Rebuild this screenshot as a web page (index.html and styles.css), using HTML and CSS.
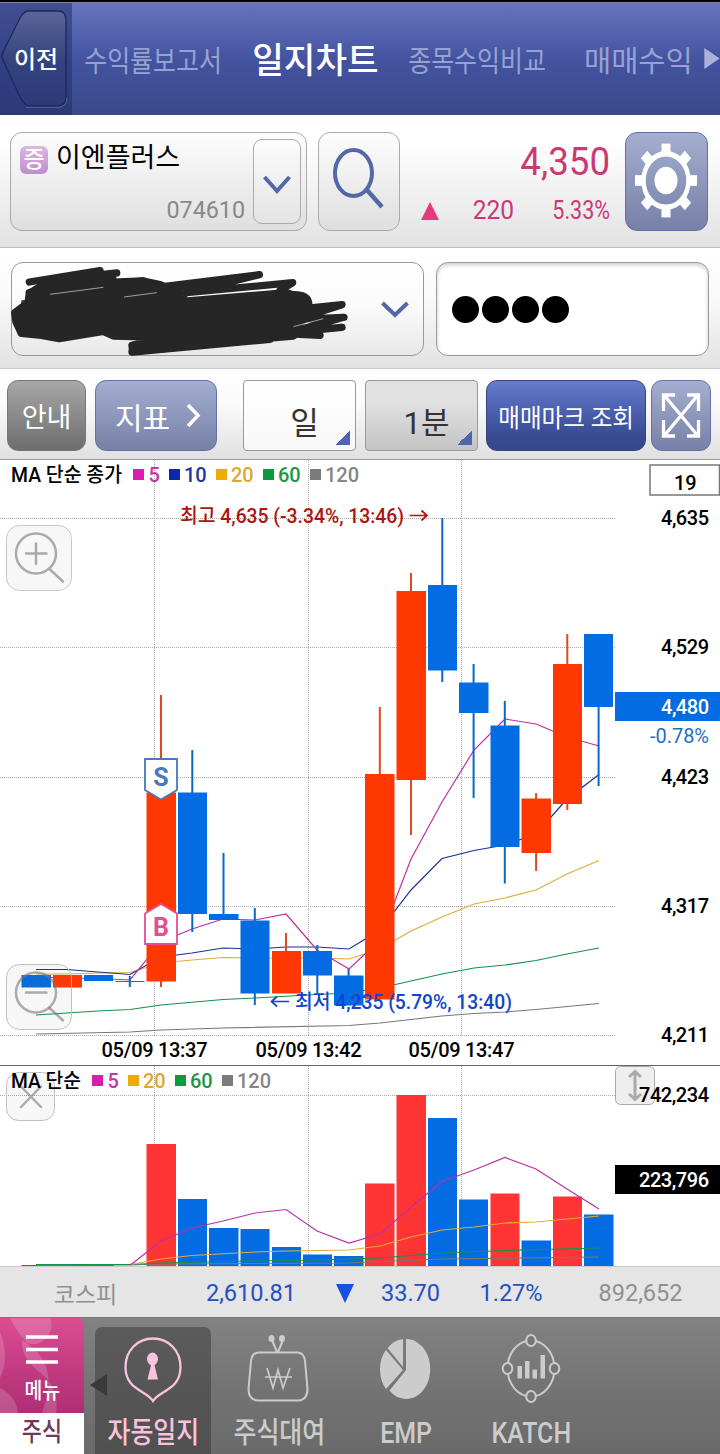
FILE: index.html
```html
<!DOCTYPE html>
<html lang="ko">
<head>
<meta charset="utf-8">
<title>일지차트</title>
<link rel="stylesheet" href="styles.css">
</head>
<body>
<div class="app">
  <header class="header">
    <button class="back">
      <svg class="back-shape" viewBox="0 0 72 113"><defs><linearGradient id="bk" x1="0" y1="0" x2="0" y2="1"><stop offset="0" stop-color="#5b6699"/><stop offset=".5" stop-color="#35447f"/><stop offset="1" stop-color="#2c3a78"/></linearGradient></defs><path d="M28 8H58Q66 8 66 17V94Q66 103 58 103H28Q24 101 20 94L3 57Q1 53 3 49L20 15Q24 8 28 8Z" fill="url(#bk)" stroke="#1d2858" stroke-width="1.3"/><path d="M26 104.300H59Q67 103 67 95" fill="none" stroke="#5663a0" stroke-width="1"/></svg>
      <span class="back-label">이전</span>
    </button>
    <nav class="tabs">
      <a class="tab tab-report"><span>수익률보고서</span></a>
      <a class="tab tab-chart"><span>일지차트</span></a>
      <a class="tab tab-compare"><span>종목수익비교</span></a>
      <a class="tab tab-trade"><span>매매수익</span></a>
    </nav>
    <svg class="more" viewBox="0 0 17 24"><path d="M1 1L17 12L1 23Z" fill="#a9b1dc"/></svg>
  </header>

  <section class="stock">
    <div class="combo">
      <div class="combo-main">
        <div class="name-line"><span class="badge">증</span><span class="name">이엔플러스</span></div>
        <div class="code">074610</div>
      </div>
      <button class="drop"><svg width="28" height="20" viewBox="0 0 28 20"><path d="M1.500 2L14 16L26.500 2" fill="none" stroke="#5468a8" stroke-width="4"/></svg></button>
    </div>
    <button class="search"><svg width="82" height="99" viewBox="0 0 82 99"><ellipse cx="34.500" cy="40" rx="18.500" ry="23" fill="none" stroke="#5468a8" stroke-width="4"/><path d="M48 57L63 74" stroke="#5468a8" stroke-width="4.500"/></svg></button>
    <div class="quote">
      <div class="price">4,350</div>
      <div class="change"><svg class="up" viewBox="0 0 18 18"><path d="M9 0L18 18H0Z" fill="#e63a7d"/></svg><span class="diff">220</span><span class="rate"><span>5.33%</span></span></div>
    </div>
    <button class="gear"><svg width="83" height="99" viewBox="0 0 83 99"><g transform="translate(40 47.500) scale(1 1.190)" fill="#fff"><g id="teeth"><rect x="-4.500" y="-31" width="9" height="9"/><rect x="-4.500" y="22" width="9" height="9"/><rect x="-31" y="-4.500" width="9" height="9"/><rect x="22" y="-4.500" width="9" height="9"/></g><use href="#teeth" transform="rotate(45)"/><circle r="22.500" fill="none" stroke="#fff" stroke-width="4.500"/><circle r="11.500"/></g></svg></button>
  </section>

  <section class="account">
    <div class="select">
      <svg width="28" height="18" viewBox="0 0 28 18"><path d="M1.500 2L14 14L26.500 2" fill="none" stroke="#5468a8" stroke-width="4"/></svg>
      <svg class="scribble" viewBox="0 0 1056 285"><g fill="#262626" stroke="#262626" stroke-width="22" stroke-linecap="round" stroke-linejoin="round"><path d="M44 152L84 122L88 94L120 74L300 62L430 57L480 68L552 98L545 118L860 92L920 112L925 165L870 200L880 222L810 228L398 269L396 250L500 226L340 222L310 208L178 230L124 220L64 214L48 180Z"/><path fill="none" d="M88 60L300 26L140 56L350 33L88 92L430 57L300 78L478 68L440 80L778 38L560 92L878 62L840 86M860 100Q920 92 926 122M910 140L1026 128L890 172L1032 166L880 208L1026 196L840 214L960 220M396 270L810 232"/><path fill="none" stroke-width="18" d="M160 55L340 46M200 72L420 60M500 84L640 64"/><path fill="none" stroke-width="4" d="M66 135V117H90"/></g><path d="M150 97L310 76M372 105L470 92M880 194L970 170" fill="none" stroke="#ddd" stroke-width="2"/></svg>
    </div>
    <div class="password"><i></i><i></i><i></i><i></i></div>
  </section>

  <section class="tools">
    <button class="btn guide">안내</button>
    <button class="btn indicator"><span>지표</span><svg width="15" height="25" viewBox="0 0 15 25"><path d="M2 2L12 12.500L2 23" fill="none" stroke="#fff" stroke-width="3.500"/></svg></button>
    <button class="period day">일</button>
    <button class="period minute">1분</button>
    <button class="btn mark"><span>매매마크 조회</span></button>
    <button class="btn expand"><svg width="60" height="71" viewBox="0 0 60 71"><path d="M13 15L47 56M47 15L13 56M12.500 31V15H24M36 15H47.500V31M12.500 40V56H24M36 56H47.500V40" fill="none" stroke="#fff" stroke-width="3.300"/></svg></button>
  </section>

  <svg class="chart price-chart" viewBox="0 460 720 605">
    <g class="grid"><path d="M154.500 460V1035M308.500 460V1035M461.500 460V1035M0 518.500H615M0 647.500H615M0 777.500H615M0 906.500H615M0 1035.500H615"/></g>
    <g class="ma">
      <polyline class="ma120" points="36,1034 130,1032 161,1030 223,1028 349,1025.500 380,1023 411,1019.500 442,1016 474,1013.500 505,1012 536,1009.500 599,1003.500"/>
      <polyline class="ma60" points="36,1015 67,1013 98,1011 130,1009.500 161,1005 223,999.500 255,998 317,994.500 349,993 380,988 411,981 442,974 474,968 505,965 536,960.500 567,954 599,948"/>
      <polyline class="ma20" points="36,974 67,974 98,973 130,972.500 161,963 192,960 223,957.500 255,958 317,958 349,959 380,949 411,931 442,917 474,904 505,898 536,890 567,874 599,860.500"/>
      <polyline class="ma10" points="36,969.500 67,969.500 98,972 130,974.500 161,957 192,953 223,948 255,949 286,947 317,947 349,949 380,930 411,890 442,858.500 474,850.500 505,845 536,834 567,799 599,774.500"/>
      <polyline class="ma5" points="36,977 67,978 98,978.500 130,980 161,942 192,929 223,919 255,920 286,914 317,950 349,969 380,940 411,859 442,802 474,750 505,719 536,724 567,737 599,746"/>
    </g>
    <g class="fall">
      <path class="wick" d="M129.800 976V987M192.300 750V932M223.500 853V920M254.800 908V1005M317.300 945V993M348.600 969V1005M442.300 518V682M473.600 664V798M504.800 701V883.500M598.600 634V786"/>
      <path d="M21.500 975h29.500v12.500h-29.500zM84 975h29v6h-29zM115.500 981h29v1h-29zM178 792.500h29v121.500h-29zM209 914h29.500v6h-29.500zM240.500 920.500h29v73h-29zM303 951h29v24.500h-29zM334 975.500h29.500v30h-29.500zM428 585h29v85.500h-29zM459 682.500h29.500v30.500h-29.500zM490.500 725.500h29v121.500h-29zM584 634h29v73h-29z"/>
    </g>
    <g class="rise">
      <path class="wick" d="M161 695V987M286 933V993M379.800 707V999M411 573V835M536.100 793V871M567.300 634V810"/>
      <path d="M53 975h29v12.500h-29zM146.500 792.500h29.500v189h-29.500zM272 951h29v42.500h-29zM365 774h29.500v225.500h-29.500zM396.500 591h29.500v189h-29.500zM521.500 798.500h29.500v54.500h-29.500zM553 664h29v140h-29z"/>
    </g>
    <path d="M145 759H177V790L161 799.500L145 790Z" fill="#fff" stroke="#4878bd" stroke-width="1.800"/>
    <path d="M145 944H177V913.500L161 904L145 913.500Z" fill="#fff" stroke="#e4508f" stroke-width="1.800"/>
    <text class="sign" x="161" y="785.500" fill="#4878bd">S</text>
    <text class="sign" x="161" y="935.500" fill="#e4508f">B</text>
    <g class="legend">
      <text x="11" y="482" textLength="111" lengthAdjust="spacingAndGlyphs">MA 단순 종가</text>
      <path fill="#d91cae" d="M133 469h11v11h-11z"/><text x="148.500" y="482" fill="#c336a8">5</text>
      <path fill="#0a28a8" d="M169 469h11v11h-11z"/><text x="184" y="482" fill="#1f3798">10</text>
      <path fill="#efac00" d="M216 469h11v11h-11z"/><text x="231" y="482" fill="#dda92b">20</text>
      <path fill="#0a9a3c" d="M263 469h11v11h-11z"/><text x="278" y="482" fill="#229545">60</text>
      <path fill="#7b7b7b" d="M310 469h11v11h-11z"/><text x="325" y="482" fill="#858585">120</text>
    </g>
    <rect x="650" y="465" width="69.500" height="30" fill="#fff" stroke="#777" stroke-width="1.500"/>
    <g class="axis">
      <text x="674" y="490" class="count">19</text>
      <text x="661" y="525" textLength="48">4,635</text><text x="661" y="654" textLength="48">4,529</text><text x="661" y="784" textLength="48">4,423</text><text x="661" y="913" textLength="48">4,317</text><text x="661" y="1042" textLength="48">4,211</text>
      <text x="650" y="743" textLength="59" class="loss">-0.78%</text>
    </g>
    <rect x="615" y="692" width="105" height="29" fill="#046ce2"/><text class="now" x="661" y="714" textLength="48">4,480</text>
    <g class="dates"><text x="101.500" y="1057" textLength="106">05/09 13:37</text><text x="255.500" y="1057" textLength="106">05/09 13:42</text><text x="408.500" y="1057" textLength="106">05/09 13:47</text></g>
    <text class="note" x="180" y="523" fill="#b01210" textLength="224" lengthAdjust="spacingAndGlyphs">최고 4,635 (-3.34%, 13:46)</text>
    <path class="arrow" d="M409.500 515.500H427M421.500 510.500L427 515.500L421.500 520.500" stroke="#b01210"/>
    <text class="note" x="295" y="1008.500" fill="#1245cf" textLength="217" lengthAdjust="spacingAndGlyphs">최저 4,235 (5.79%, 13:40)</text>
    <path class="arrow" d="M289 1001.500H271.500M277 996.500L271.500 1001.500L277 1006.500" stroke="#1245cf"/>
    <g class="float"><rect x="6.500" y="525.500" width="65" height="65" rx="13"/><circle cx="36" cy="553.500" r="20"/><path d="M26 553.500H46.500M36 543.500V564M49.500 569L63 581.500"/></g>
    <g class="float over"><rect x="6.500" y="964.500" width="65" height="65" rx="13"/><circle cx="36" cy="992.500" r="20"/><path d="M26 992.500H46.500M49.500 1008L63 1020.500"/></g>
  </svg>

  <svg class="chart volume-chart" viewBox="0 1066 720 200">
    <g class="grid"><path d="M154.500 1066V1266M308.500 1066V1266M461.500 1066V1266M0 1095.500H615"/></g>
    <g class="float over"><rect x="6.500" y="1072.500" width="48" height="48" rx="12"/><path d="M21 1086.500L41 1107M41 1086.500L21 1107"/></g>
    <path fill="#046ce2" d="M21.500 1265h92v1h-92zM178 1199h29v67h-29zM209 1228h29.500v38h-29.500zM240.500 1229h29v37h-29zM272 1247h29v19h-29zM303 1254.500h29v12h-29zM334 1256h29.500v10h-29.500zM428 1118h29v148h-29zM459 1199.500h29v67h-29zM521.500 1240.500h29.500v26h-29.500zM584 1214.500h29.500v52h-29.500z"/>
    <path fill="#ff3434" d="M146.500 1144h29.500v122h-29.500zM365 1183.500h29.500v83h-29.500zM396.500 1095h29.500v171h-29.500zM490.500 1193.500h29v73h-29zM553 1196.500h29v70h-29z"/>
    <g class="ma">
      <polyline class="ma120" points="36,1265.500 130,1265 161,1264 349,1263 380,1261.500 442,1259 599,1257"/>
      <polyline class="ma60" points="36,1264.500 130,1264.500 161,1263 223,1261.500 317,1260 380,1258 442,1253 505,1250.500 599,1248"/>
      <polyline class="ma20" points="130,1264.500 161,1259 192,1255.500 255,1252 286,1251 349,1250 380,1246 411,1237 442,1230 474,1227 505,1223 536,1222 567,1219 599,1216"/>
      <polyline class="ma5" points="130,1265 133,1263 161,1241 192,1228 223,1221 255,1213 286,1209.500 317,1231 349,1243 380,1234 411,1207 442,1181.500 474,1170 505,1157.500 536,1169 567,1189 599,1209"/>
    </g>
    <g class="legend">
      <text x="11" y="1088" textLength="70" lengthAdjust="spacingAndGlyphs">MA 단순</text>
      <path fill="#d91cae" d="M92 1075h11v11h-11z"/><text x="107.500" y="1088" fill="#c336a8">5</text>
      <path fill="#efac00" d="M128 1075h11v11h-11z"/><text x="143" y="1088" fill="#dda92b">20</text>
      <path fill="#0a9a3c" d="M175 1075h11v11h-11z"/><text x="190" y="1088" fill="#229545">60</text>
      <path fill="#7b7b7b" d="M222 1075h11v11h-11z"/><text x="237" y="1088" fill="#858585">120</text>
    </g>
    <g class="resize"><rect x="615.500" y="1066.500" width="39" height="38" rx="5"/><path d="M635 1072V1099M629 1077L635 1071.500L641 1077M629 1094L635 1099.500L641 1094"/></g>
    <g class="axis"><text x="639" y="1102" textLength="70">742,234</text></g>
    <rect x="615" y="1165" width="105" height="29"/><text class="now" x="639" y="1187" textLength="70">223,796</text>
  </svg>

  <section class="ticker">
    <span class="index">코스피</span>
    <span class="value">2,610.81</span>
    <svg class="down" viewBox="0 0 18 19"><path d="M0 0H18L9 19Z" fill="#184fe0"/></svg>
    <span class="delta">33.70</span>
    <span class="percent">1.27%</span>
    <span class="amount">892,652</span>
  </section>

  <footer class="nav">
    <div class="menu">
      <button class="menu-top">
        <svg class="swirl" viewBox="0 0 84 95"><path d="M10 0Q18 18 37 34Q57 55 42 95H56Q60 72 42 56Q20 40 22 22Q36 32 48 18Q54 8 50 0ZM0 14Q10 40 0 60ZM0 70Q16 78 18 95H0Z" fill="#fff" opacity=".17"/></svg>
        <svg class="bars" viewBox="0 0 32 30"><path d="M0 2H32M0 14.500H32M0 27H32" stroke="#fff" stroke-width="3.600"/></svg>
        <span>메뉴</span>
      </button>
      <div class="menu-sub"><span>주식</span></div>
    </div>
    <svg class="prev" viewBox="0 0 18 24"><path d="M17 1V23L0 12Z" fill="#3a3a3a"/></svg>
    <a class="item item-diary">
      <svg viewBox="0 0 64 76"><g transform="translate(1 3)"><path d="M31 1.500C47 1.500 58.500 14 58.500 30C58.500 53 38 53 31 64C24 53 3.500 53 3.500 30C3.500 14 15 1.500 31 1.500Z" fill="none" stroke="#f9c3de" stroke-width="2.300"/><ellipse cx="30.500" cy="22" rx="5.500" ry="6.500" fill="#f9c3de"/><path d="M29.500 26H32L36 42.500H25.500Z" fill="#f9c3de"/></g></svg>
      <span>자동일지</span>
    </a>
    <a class="item item-lend">
      <svg viewBox="1 0 64 76"><g fill="none" stroke="#ccc" stroke-width="2"><path d="M12 18.500H52Q58 19 59 27L61.500 55Q61.500 66 52 66.500H12Q2.500 66 2.500 55L5 27Q6 19 12 18.500Z"/><path d="M31 18L26 6M32 18L37 6"/><path stroke-width="1.700" d="M21 34L27 54L32 36L37 54L44 34M19 43H46"/></g><ellipse cx="25.500" cy="4.500" rx="3" ry="3.600" fill="#ccc"/><ellipse cx="36" cy="4.500" rx="3" ry="3.600" fill="#ccc"/></svg>
      <span>주식대여</span>
    </a>
    <a class="item item-emp">
      <svg viewBox="3 1 64 76"><path d="M34 6A24 30 0 1 1 17.500 57.500L34 37Z" fill="#ccc"/><path d="M31 6V34L15.500 15Q22 7 31 6ZM14 17L31 37L14 56Q8 48 8 36Q8 25 14 17Z" fill="#ccc"/></svg>
      <span>EMP</span>
    </a>
    <a class="item item-katch">
      <svg viewBox="1 1 64 76"><g fill="none" stroke="#ccc" stroke-width="2"><ellipse cx="32" cy="35.500" rx="23.500" ry="28"/><g fill="#767676"><ellipse cx="32" cy="7.500" rx="4.800" ry="5.500"/><ellipse cx="32" cy="63.500" rx="4.800" ry="5.500"/><ellipse cx="8.500" cy="35.500" rx="4.800" ry="5.500"/><ellipse cx="55.500" cy="35.500" rx="4.800" ry="5.500"/></g></g><path fill="#ccc" d="M18.500 33h4.500v12.500h-4.500zM26 28h4.500v17.500h-4.500zM33.500 36.500h4.500v9h-4.500zM41.500 22h4.500v23.500h-4.500z"/></svg>
      <span>KATCH</span>
    </a>
  </footer>
</div>
</body>
</html>
```

FILE: styles.css
```css
* { box-sizing: border-box; }
body { margin: 0; background: #fff; font-family: Roboto, "Noto Sans CJK KR", sans-serif; }
button { margin: 0; padding: 0; border: 0; background: none; font: inherit; color: inherit; }
svg { display: block; flex: none; }
.app { width: 720px; height: 1454px; overflow: hidden; border-top: 2px solid #000; }

.header { display: flex; align-items: center; height: 113px; background: linear-gradient(#6673ba, #5363b0 28%, #4353a0 50%, #3e4e95 75%, #3a4988); border-top: 1px solid #8085a8; }
.back { position: relative; flex: none; width: 72px; height: 112px; padding-top: 2px; background: linear-gradient(#414f91, #303f86 60%, #2b3974); }
.back-shape { position: absolute; left: 0; top: 0; width: 72px; height: 113px; }
.back-label { position: relative; display: block; color: #fff; font-size: 24px; font-weight: 500; line-height: 24px; text-align: center; }
.tabs { display: flex; flex: none; width: 631px; height: 112px; align-items: center; }
.tab { display: flex; flex: none; justify-content: center; color: #98a2d2; font-size: 29px; white-space: nowrap; padding-bottom: 1px; }
.tab-report { width: 162px; }
.tab-report span, .tab-compare span { transform: scaleX(.86); }
.tab-chart { width: 162px; font-size: 35px; font-weight: 500; color: #fff; padding-bottom: 3px; }
.tab-chart span { transform: scaleX(.98); }
.tab-compare { width: 162px; }
.tab-trade { width: 145px; padding-left: 16px; }
.tab-trade span { transform: scaleX(1.02); }
.more { width: 17px; height: 23px; margin-bottom: 1px; }

.stock { display: flex; height: 133px; padding: 17px 12px 0 10px; background: linear-gradient(#fff, #fff 20%, #e2e2e2); border-bottom: 1px solid #bdbdbd; }
.combo { display: flex; width: 297px; height: 99px; padding: 6px 5px 0 9px; border: 1px solid #aaa; border-radius: 12px; background: linear-gradient(#fdfdfd, #dfdfdf); }
.combo-main { width: 233px; padding-right: 8px; }
.name-line { display: flex; gap: 8px; height: 54px; }
.badge { width: 28px; height: 28px; margin-top: 7px; border-radius: 6px; background: linear-gradient(#dcb8e2, #c08dcc); color: #fff; font-size: 23px; line-height: 27px; text-align: center; font-weight: 500; }
.name { font-size: 27px; line-height: 38px; color: #000; }
.code { color: #888; font-size: 24px; line-height: 34px; text-align: right; transform: scaleX(.97); transform-origin: right; }
.drop { display: flex; width: 48px; height: 85px; padding-top: 6px; align-items: center; justify-content: center; border: 1px solid #aaa; border-radius: 9px; background: linear-gradient(#fcfcfc, #e4e4e4); }
.search { width: 82px; height: 99px; margin-left: 11px; border: 1px solid #aaa; border-radius: 12px; background: linear-gradient(#fdfdfd, #dfdfdf); overflow: hidden; }
.quote { width: 210px; color: #cb3975; text-align: right; }
.price { font-size: 38px; line-height: 60px; transform: scaleX(.965); transform-origin: right; }
.change { display: flex; align-items: center; height: 37px; }
.up { width: 18px; height: 18px; margin-left: 21px; }
.diff { width: 75px; font-size: 25px; transform: scaleX(.98); transform-origin: right; }
.rate { width: 96px; font-size: 25px; transform: scaleX(.86); transform-origin: right; }
.gear { width: 83px; height: 99px; margin-left: 15px; border: 1px solid #6371a4; border-radius: 12px; background: linear-gradient(#a4aecf, #7781a8); overflow: hidden; }

.account { display: flex; gap: 12px; height: 121px; padding: 14px 11px 0; background: linear-gradient(#fff, #fafafa 40%, #e2e2e2); border-bottom: 1px solid #c9c9c9; }
.select { position: relative; display: flex; align-items: center; justify-content: flex-end; width: 413px; height: 94px; padding: 2px 14px 0 0; border: 1px solid #999; border-radius: 12px; background: linear-gradient(#fff, #fafafa 50%, #e8e8e8); }
.scribble { position: absolute; left: -12px; top: -1px; width: 352px; height: 95px; }
.password { display: flex; align-items: center; gap: 3px; width: 273px; height: 94px; padding-left: 15px; border: 1px solid #999; border-radius: 12px; background: #fff; box-shadow: inset 0 2px 4px #ccc; }
.password i { width: 27px; height: 27px; border-radius: 50%; background: #000; }

.tools { display: flex; height: 91px; padding: 11px 0 0 7px; background: linear-gradient(#fff, #fafafa 40%, #e0e0e0); border-bottom: 1px solid #999; }
.btn { display: flex; align-items: center; justify-content: center; height: 71px; border-radius: 11px; color: #fff; white-space: nowrap; overflow: hidden; }
.guide { width: 79px; border: 1px solid #777; background: linear-gradient(#a8a8a8, #6d6d6d); font-size: 27px; }
.indicator { gap: 16px; width: 122px; margin-left: 9px; padding-left: 4px; border: 1px solid #6371a4; background: linear-gradient(#a4aecf, #7781a8); font-size: 30px; }
.period { width: 113px; height: 71px; padding: 9px 0 0 10px; border: 1px solid #999; border-radius: 4px; color: #333; font-size: 31px; }
.day { margin-left: 26px; background: linear-gradient(135deg, transparent 50%, #4f66ae 50%) 91px 49px / 15px 15px no-repeat, linear-gradient(#fff, #f8f8f8); }
.minute { margin-left: 9px; background: linear-gradient(135deg, transparent 50%, #4f66ae 50%) 91px 49px / 15px 15px no-repeat, linear-gradient(#e1e1e1 30%, #c4c4c4); }
.mark { width: 160px; margin-left: 8px; border: 1px solid #35457f; background: linear-gradient(#667ccc, #4a5fae 45%, #384b90 80%, #34468c); font-size: 25px; }
.mark span { transform: scaleX(.94); }
.expand { width: 60px; margin-left: 5px; border: 1px solid #6371a4; background: linear-gradient(#a4aecf, #7781a8); }

.chart { width: 720px; background: #fff; font-size: 20px; }
.price-chart { height: 605px; }
.volume-chart { height: 201px; border-top: 1px solid #666; }
.grid path { stroke: #aaa; stroke-width: 1; stroke-dasharray: 1 1; fill: none; }
.ma polyline { fill: none; stroke-width: 1.2; }
.ma5 { stroke: #bd2fa9; }
.ma10 { stroke: #1b3192; }
.ma20 { stroke: #e0ad34; }
.ma60 { stroke: #16914a; }
.ma120 { stroke: #777; }
.fall { fill: #046ce2; }
.rise { fill: #ff3700; }
.wick { stroke-width: 2; fill: none; }
.fall .wick { stroke: #0b68cb; }
.rise .wick { stroke: #dd4a20; }
.sign { font-size: 25px; font-weight: 700; text-anchor: middle; }
.legend text, .dates text, .note { font-weight: 500; }
.axis text, .now { font-weight: 500; }
.axis .loss { fill: #1f6fc0; font-weight: 400; }
.now { fill: #fff; }
.arrow { fill: none; stroke-width: 1.7; }
.float rect { fill: #f7f7f7; stroke: #c8c8c8; }
.float circle, .float path { fill: none; stroke: #aaa; stroke-width: 2.5; stroke-linecap: round; }
.over rect { fill: rgba(120, 120, 120, .06); stroke: #c0c0c0; }
.over circle, .over path { stroke: rgba(120, 120, 120, .6); }
.resize rect { fill: #eee; stroke: #aaa; }
.resize path { fill: none; stroke: #aaa; stroke-width: 3; }

.ticker { display: flex; align-items: center; height: 51px; padding-top: 2px; border-top: 1px solid #ccc; background: #e5e5e5; color: #2450c4; font-size: 24px; text-align: center; white-space: nowrap; }
.ticker span { flex: none; }
.index { width: 171px; color: #909090; font-size: 23px; }
.value { width: 160px; transform: scaleX(.98); }
.down { width: 18px; height: 19px; margin-left: 5px; }
.delta { width: 113px; transform: scaleX(.98); }
.percent { width: 88px; transform: scaleX(.98); }
.amount { width: 171px; color: #909090; transform: scaleX(.98); }

.nav { position: relative; display: flex; height: 137px; background: linear-gradient(#828282, #747474 50%, #6a6a6a); border-top: 1px solid #777; }
.menu { width: 84px; }
.menu-top { position: relative; display: flex; flex-direction: column; align-items: center; width: 84px; height: 95px; padding-top: 17px; border-radius: 0 6px 0 0; overflow: hidden; background: linear-gradient(#db4d93, #c43c83 50%, #af2f74); color: #fff; font-size: 22px; font-weight: 500; }
.swirl { position: absolute; left: 0; top: 0; width: 84px; height: 95px; }
.bars { width: 32px; height: 30px; }
.menu-top span { margin-top: 10px; line-height: 32px; transform: scaleX(.88); }
.menu-sub { height: 42px; background: #fff; color: #6b3a56; font-size: 26px; font-weight: 500; line-height: 39px; text-align: center; }
.menu-sub span { display: inline-block; transform: scaleX(.84); }
.prev { position: absolute; left: 90px; top: 55px; width: 18px; height: 24px; z-index: 1; }
.item { display: flex; flex-direction: column; align-items: center; height: 128px; margin-top: 9px; padding-top: 7px; color: #ccc; font-size: 29px; font-weight: 500; white-space: nowrap; }
.item svg { width: 64px; height: 76px; }
.item span { margin-top: 5px; line-height: 36px; transform: scaleX(.86); }
.item-diary { width: 116px; margin-left: 11px; border-radius: 7px 7px 0 0; background: linear-gradient(#5b5b5b, #505050); color: #f9c3de; }
.item-lend { width: 136px; }
.item-emp { width: 119px; }
.item-katch { width: 131px; }
```
